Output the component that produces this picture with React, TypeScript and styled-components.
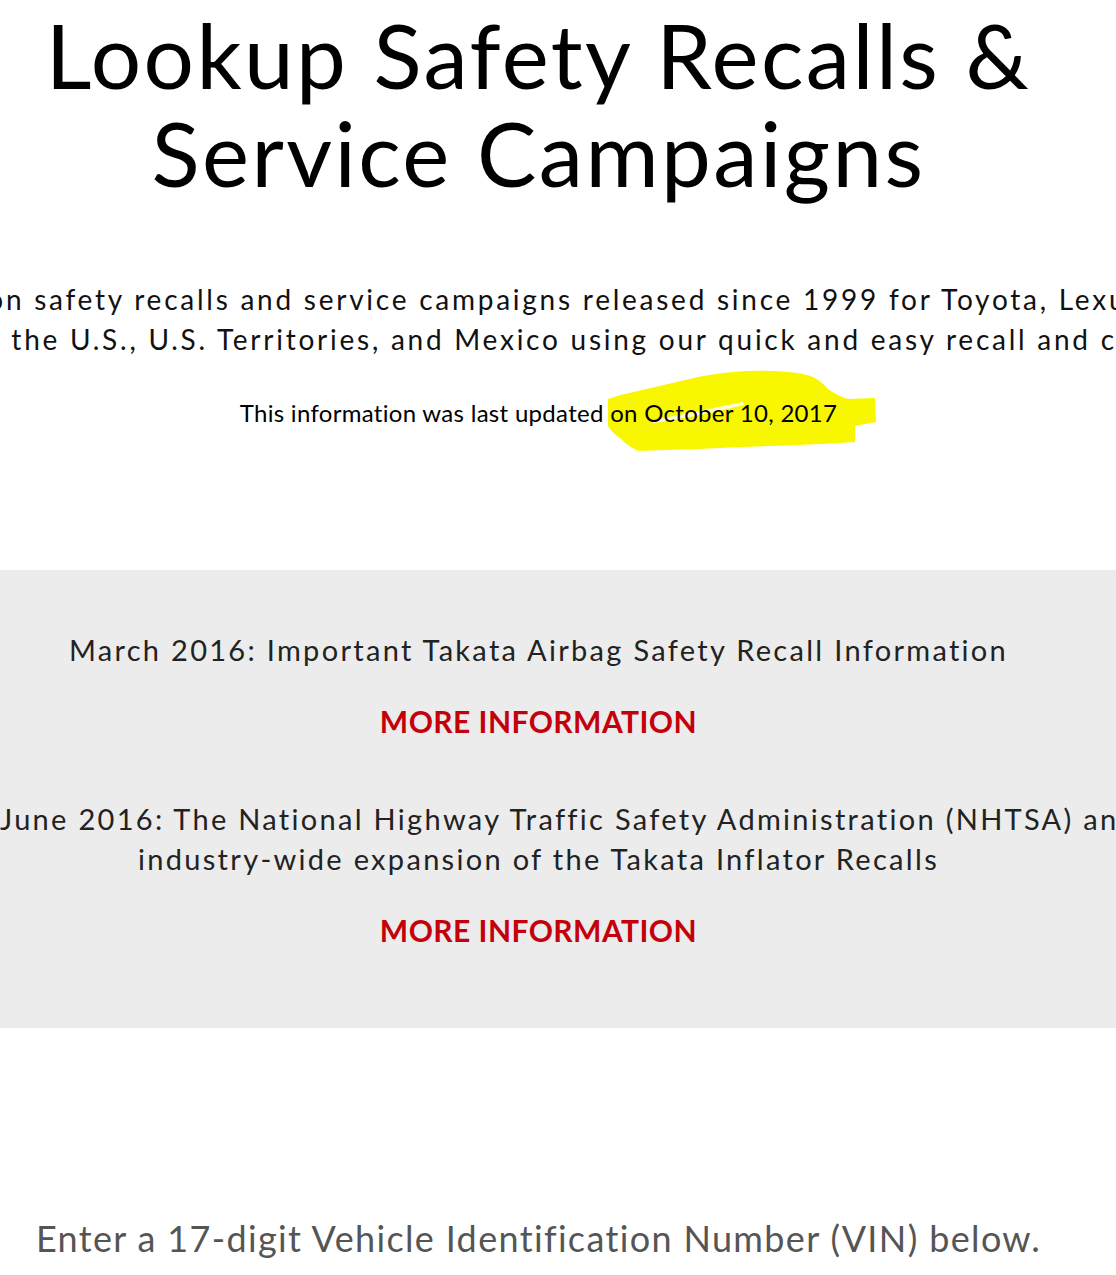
import React from 'react';
import styled, { createGlobalStyle } from 'styled-components';

const GlobalStyle = createGlobalStyle`
  html, body {
    margin: 0;
    padding: 0;
    background: #fff;
  }
  body {
    font-family: Lato, "Noto Sans", sans-serif;
    color: #111;
    overflow-x: hidden;
  }
`;

const Page = styled.main`
  width: 100%;
  overflow: hidden;
`;

const Column = styled.div`
  width: 1077px;
  display: flex;
  flex-direction: column;
  align-items: center;
`;

const Title = styled.h1`
  margin: 0;
  padding-top: 6px;
  font-size: 89px;
  line-height: 98px;
  font-weight: 400;
  letter-spacing: 2.4px;
  text-align: center;
  color: #000;
`;

const Intro = styled.div`
  margin-top: 77px;
  display: flex;
  flex-direction: column;
  align-items: center;
  font-size: 28px;
  line-height: 40px;
  letter-spacing: 2.75px;
  color: #111;
`;

const Line = styled.span`
  white-space: nowrap;
`;

const Updated = styled.p`
  position: relative;
  z-index: 0;
  margin: 39px 0 0;
  font-size: 24px;
  line-height: 30px;
  letter-spacing: 0.3px;
  color: #000;
  text-align: center;
`;

const Marked = styled.span`
  position: relative;
`;

const Smear = styled.svg`
  position: absolute;
  left: -6px;
  top: -42px;
  z-index: -1;
  pointer-events: none;
`;

const Band = styled.section`
  margin-top: 142px;
  background: #ececec;
  padding: 60px 0 78px;
`;

const Notice = styled.div`
  width: 100%;
  display: flex;
  flex-direction: column;
  align-items: center;
  & + & {
    margin-top: 58px;
  }
`;

const NoticeText = styled.p`
  width: 100%;
  margin: 0;
  font-size: 29px;
  line-height: 40px;
  letter-spacing: 2.3px;
  color: #222;
  text-align: center;
`;

const NoticeLine = styled.span<{ $overflow?: boolean }>`
  display: block;
  white-space: nowrap;
  text-align: ${(p) => (p.$overflow ? 'left' : 'center')};
`;

const MoreLink = styled.a`
  margin-top: 31px;
  font-size: 30px;
  line-height: 40px;
  font-weight: 700;
  color: #c4000b;
  text-decoration: none;
  letter-spacing: 0.45px;
  text-transform: uppercase;
`;

const VinPrompt = styled.p`
  margin: 188px 0 0;
  font-size: 36px;
  line-height: 44px;
  letter-spacing: 1.35px;
  color: #555;
  text-align: center;
`;

const notices = [
  {
    lines: ['March 2016: Important Takata Airbag Safety Recall Information'],
  },
  {
    lines: [
      'June 2016: The National Highway Traffic Safety Administration (NHTSA) announced an',
      'industry-wide expansion of the Takata Inflator Recalls',
    ],
  },
];

const App = () => {
  return (
    <Page>
      <GlobalStyle />
      <Column>
        <Title>
          Lookup Safety Recalls &amp;
          <br />
          Service Campaigns
        </Title>

        <Intro>
          <Line>Search for information on safety recalls and service campaigns released since 1999 for Toyota, Lexus, and Scion vehicles</Line>
          <Line>that were distributed in the U.S., U.S. Territories, and Mexico using our quick and easy recall and campaign lookup tool.</Line>
        </Intro>

        <Updated>
          This information was last updated{' '}
          <Marked>
            <Smear width="280" height="100" viewBox="0 0 280 100">
              <path
                d="M4 43 Q18 38 34 35 Q64 28 94 21 Q120 16 144 15 Q166 14 184 16 Q200 17 209 21 Q218 26 224 33 Q234 40 244 43 L271 42 L272 66 L251 70 L251 86 Q224 88 194 89 Q140 91 94 93 L34 95 Q24 90 17 83 Q8 77 4 70 Z"
                fill="#f9f700"
              />
              <path d="M44 65 Q92 56 139 46 L140 49 Q96 60 50 67 Z" fill="#fffbe0" />
            </Smear>
            on October 10, 2017
          </Marked>
        </Updated>
      </Column>

      <Band>
        <Column>
          {notices.map((n, i) => (
            <Notice key={i}>
              <NoticeText>
                {n.lines.map((l, j) => (
                  <NoticeLine key={j} $overflow={n.lines.length > 1 && j === 0}>
                    {l}
                  </NoticeLine>
                ))}
              </NoticeText>
              <MoreLink href="#">More Information</MoreLink>
            </Notice>
          ))}
        </Column>
      </Band>

      <Column>
        <VinPrompt>Enter a 17-digit Vehicle Identification Number (VIN) below.</VinPrompt>
      </Column>
    </Page>
  );
};

export default App;
